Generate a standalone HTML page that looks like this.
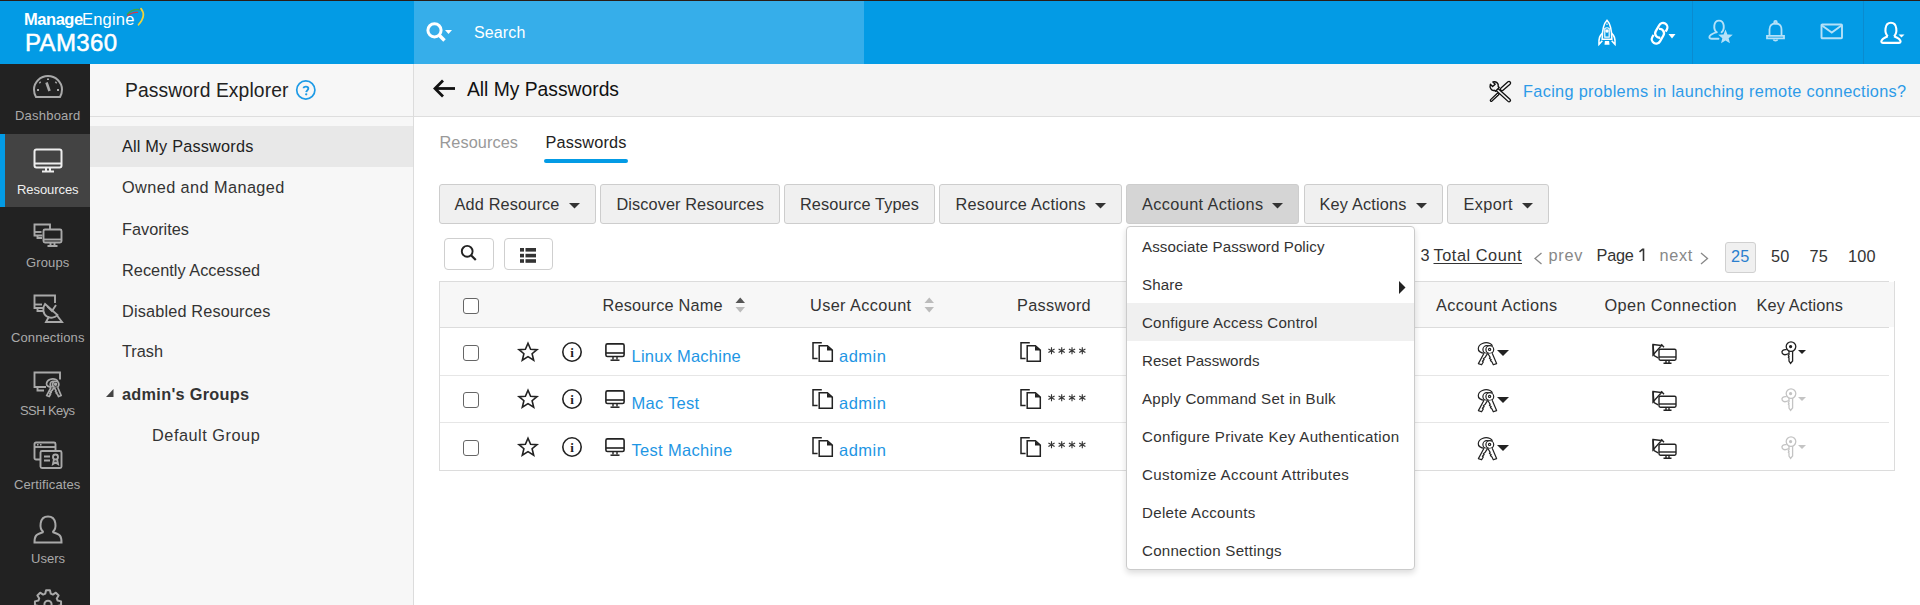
<!DOCTYPE html>
<html><head><meta charset="utf-8"><style>
html,body{margin:0;padding:0;width:1920px;height:605px;overflow:hidden;background:#fff;font-family:"Liberation Sans", sans-serif;}
.t{position:absolute;white-space:pre;line-height:normal;}
svg{overflow:visible}
</style></head><body>
<div style="position:absolute;left:0px;top:0px;width:1920px;height:64px;background:#039be5"></div>
<div style="position:absolute;left:0px;top:0px;width:1920px;height:1px;background:#2a1d17"></div>
<div style="position:absolute;left:414px;top:1px;width:450px;height:63px;background:#36aeea"></div>
<div style="position:absolute;left:1692px;top:1px;width:1px;height:63px;background:#0a8bcf"></div>
<div style="position:absolute;left:1863px;top:1px;width:1px;height:63px;background:#0a8bcf"></div>
<div style="position:absolute;left:0px;top:64px;width:90px;height:541px;background:#222"></div>
<div style="position:absolute;left:0px;top:134px;width:90px;height:73px;background:#434343"></div>
<div style="position:absolute;left:0px;top:134px;width:5px;height:73px;background:#039be5"></div>
<div style="position:absolute;left:90px;top:64px;width:323px;height:541px;background:#f7f7f7"></div>
<div style="position:absolute;left:413px;top:64px;width:1px;height:541px;background:#dcdcdc"></div>
<div style="position:absolute;left:90px;top:116px;width:323px;height:1px;background:#dedede"></div>
<div style="position:absolute;left:90px;top:126px;width:323px;height:41px;background:#e8e8e8"></div>
<div style="position:absolute;left:414px;top:64px;width:1506px;height:52px;background:#f4f4f4"></div>
<div style="position:absolute;left:414px;top:116px;width:1506px;height:1px;background:#dedede"></div>
<div style="position:absolute;left:544px;top:159px;width:84px;height:4px;background:#039be5;border-radius:2px"></div>
<div style="position:absolute;left:439px;top:184px;width:157px;height:40px;box-sizing:border-box;border:1px solid #cdcdcd;border-radius:3px;background:#f0f0f0"></div>
<div style="position:absolute;left:600px;top:184px;width:180px;height:40px;box-sizing:border-box;border:1px solid #cdcdcd;border-radius:3px;background:#f0f0f0"></div>
<div style="position:absolute;left:784px;top:184px;width:151px;height:40px;box-sizing:border-box;border:1px solid #cdcdcd;border-radius:3px;background:#f0f0f0"></div>
<div style="position:absolute;left:939px;top:184px;width:183px;height:40px;box-sizing:border-box;border:1px solid #cdcdcd;border-radius:3px;background:#f0f0f0"></div>
<div style="position:absolute;left:1126px;top:184px;width:173px;height:40px;box-sizing:border-box;border:1px solid #cdcdcd;border-radius:3px;background:#d5d5d5"></div>
<div style="position:absolute;left:1304px;top:184px;width:139px;height:40px;box-sizing:border-box;border:1px solid #cdcdcd;border-radius:3px;background:#f0f0f0"></div>
<div style="position:absolute;left:1447px;top:184px;width:102px;height:40px;box-sizing:border-box;border:1px solid #cdcdcd;border-radius:3px;background:#f0f0f0"></div>
<svg style="position:absolute;left:569px;top:203px;" width="11" height="5.5" viewBox="0 0 11 5.5"><path d="M0 0H11L5.5 5.5Z" fill="#333"/></svg>
<svg style="position:absolute;left:1095px;top:203px;" width="11" height="5.5" viewBox="0 0 11 5.5"><path d="M0 0H11L5.5 5.5Z" fill="#333"/></svg>
<svg style="position:absolute;left:1272px;top:203px;" width="11" height="5.5" viewBox="0 0 11 5.5"><path d="M0 0H11L5.5 5.5Z" fill="#333"/></svg>
<svg style="position:absolute;left:1416px;top:203px;" width="11" height="5.5" viewBox="0 0 11 5.5"><path d="M0 0H11L5.5 5.5Z" fill="#333"/></svg>
<svg style="position:absolute;left:1522px;top:203px;" width="11" height="5.5" viewBox="0 0 11 5.5"><path d="M0 0H11L5.5 5.5Z" fill="#333"/></svg>
<div style="position:absolute;left:444px;top:238px;width:50px;height:32px;box-sizing:border-box;border:1px solid #cfcfcf;border-radius:4px;background:#fff"></div>
<div style="position:absolute;left:504px;top:238px;width:49px;height:32px;box-sizing:border-box;border:1px solid #cfcfcf;border-radius:4px;background:#fff"></div>
<svg style="position:absolute;left:458px;top:243px;" width="22" height="20" viewBox="0 0 22 20"><circle cx="9.2" cy="8.3" r="5.4" fill="none" stroke="#222" stroke-width="1.9"/><path d="M13 12.2L17.8 17" stroke="#222" stroke-width="2.2"/></svg>
<svg style="position:absolute;left:519px;top:247px;" width="18" height="17" viewBox="0 0 18 17"><rect x="1" y="1" width="4" height="3.6" fill="#333"/><rect x="6.5" y="1" width="10.5" height="3.6" fill="#333"/><rect x="1" y="6.8" width="4" height="3.6" fill="#333"/><rect x="6.5" y="6.8" width="10.5" height="3.6" fill="#333"/><rect x="1" y="12.2" width="4" height="3.6" fill="#333"/><rect x="6.5" y="12.2" width="10.5" height="3.6" fill="#333"/></svg>
<div style="position:absolute;left:1725px;top:242px;width:31px;height:31px;box-sizing:border-box;border:1px solid #d0d0d0;border-radius:3px;background:#f0f0f0"></div>
<div style="position:absolute;left:439px;top:281px;width:1456px;height:190px;box-sizing:border-box;border:1px solid #dcdcdc;border-top:none;"></div>
<div style="position:absolute;left:440px;top:282px;width:1454px;height:45px;background:#f7f7f7"></div>
<div style="position:absolute;left:439px;top:281px;width:1450px;height:1px;background:#dcdcdc"></div>
<div style="position:absolute;left:440px;top:327px;width:1449px;height:1px;background:#dcdcdc"></div>
<div style="position:absolute;left:440px;top:375px;width:1449px;height:1px;background:#e6e6e6"></div>
<div style="position:absolute;left:440px;top:422px;width:1449px;height:1px;background:#e6e6e6"></div>
<div style="position:absolute;left:463px;top:298px;width:16px;height:16px;box-sizing:border-box;border:1.5px solid #666;border-radius:3px;background:#fff"></div>
<div style="position:absolute;left:463px;top:345px;width:16px;height:16px;box-sizing:border-box;border:1.5px solid #666;border-radius:3px;background:#fff"></div>
<div style="position:absolute;left:463px;top:392px;width:16px;height:16px;box-sizing:border-box;border:1.5px solid #666;border-radius:3px;background:#fff"></div>
<div style="position:absolute;left:463px;top:440px;width:16px;height:16px;box-sizing:border-box;border:1.5px solid #666;border-radius:3px;background:#fff"></div>
<svg style="position:absolute;left:735px;top:297px;" width="11" height="16" viewBox="0 0 11 16"><path d="M0.5 6L5.25 0.5L10 6Z" fill="#555"/><path d="M0.5 10H10L5.25 15.5Z" fill="#bbb"/></svg>
<svg style="position:absolute;left:924px;top:297px;" width="11" height="16" viewBox="0 0 11 16"><path d="M0.5 6L5.25 0.5L10 6Z" fill="#bbb"/><path d="M0.5 10H10L5.25 15.5Z" fill="#bbb"/></svg>
<svg style="position:absolute;left:517.5px;top:342px;" width="20" height="20" viewBox="0 0 20 20"><path d="M10 1.2L12.6 7.2L19 7.6L14.1 11.7L15.7 18.2L10 14.6L4.3 18.2L5.9 11.7L1 7.6L7.4 7.2Z" fill="none" stroke="#222" stroke-width="1.6" stroke-linejoin="miter"/></svg>
<svg style="position:absolute;left:561.5px;top:342px;" width="20" height="20" viewBox="0 0 20 20"><circle cx="10" cy="10" r="9.2" fill="none" stroke="#222" stroke-width="1.6"/><text x="10" y="14.8" text-anchor="middle" font-family="Liberation Serif" font-weight="700" font-size="13" fill="#222">i</text></svg>
<svg style="position:absolute;left:605px;top:343px;" width="20" height="19" viewBox="0 0 20 19"><rect x="0.9" y="0.9" width="18.2" height="12.6" rx="1.6" fill="none" stroke="#222" stroke-width="1.6"/><path d="M1 10H19" stroke="#222" stroke-width="1.6"/><path d="M8 13.5V16.5M12 13.5V16.5" stroke="#222" stroke-width="1.4"/><path d="M5.5 17.2H14.5" stroke="#222" stroke-width="1.5"/></svg>
<svg style="position:absolute;left:812px;top:342px;" width="22" height="20" viewBox="0 0 22 20"><path d="M9.8 0.8H1V16.6H5.6" fill="none" stroke="#222" stroke-width="1.5"/><path d="M7.2 3.8H15.4L20.3 8.2V19.3H7.2Z" fill="none" stroke="#222" stroke-width="1.5"/><path d="M15 3.8V8.6H20.3Z" fill="#222"/></svg>
<svg style="position:absolute;left:1020px;top:342px;" width="22" height="20" viewBox="0 0 22 20"><path d="M9.8 0.8H1V16.6H5.6" fill="none" stroke="#222" stroke-width="1.5"/><path d="M7.2 3.8H15.4L20.3 8.2V19.3H7.2Z" fill="none" stroke="#222" stroke-width="1.5"/><path d="M15 3.8V8.6H20.3Z" fill="#222"/></svg>
<svg style="position:absolute;left:1477px;top:341px;" width="20" height="23" viewBox="0 0 20 23"><g fill="none" stroke="#222" stroke-width="1.2" stroke-linejoin="round"><path d="M8.3 12.5C4 12 1 10.5 1.3 7.5C1.6 3 8 0.3 13 2.5C14.5 3.2 15.2 4 15.3 5"/><circle cx="9.8" cy="8.6" r="3.9" fill="#fff"/><circle cx="12.8" cy="8.6" r="3.9" fill="#fff"/><circle cx="12.6" cy="8.4" r="1.1"/><path d="M7 12.2L1.4 22.6L4.6 23.8L6.3 20.9L5.4 20.2L7.2 18.6L6.3 17.9L8.2 16.2L10.4 12.8" fill="#fff"/><path d="M11 12.8L13.2 16.4L12.4 17.2L14.2 18.8L13.4 19.6L15 21L16.3 23.8L19.6 22.6L15.2 12.2" fill="#fff"/></g></svg>
<svg style="position:absolute;left:1497px;top:350px;" width="12" height="6" viewBox="0 0 12 6"><path d="M0 0H12L6.0 6Z" fill="#222"/></svg>
<svg style="position:absolute;left:1652px;top:342.5px;" width="25" height="21" viewBox="0 0 25 21"><g fill="none" stroke="#222" stroke-width="1.4"><path d="M1 1.5L9.5 2.5L1 12Z"/><path d="M1 1.5L2 12.5L6.2 14.8"/><path d="M9.2 1.2L12 4.2"/><rect x="7" y="6.2" width="17" height="11" rx="1.4" fill="#fff"/><path d="M7 14H24"/><path d="M14 17.5V20M17 17.5V20M11.5 20.3H19.5"/></g></svg>
<svg style="position:absolute;left:1781px;top:341px;" width="16" height="23" viewBox="0 0 16 23"><g fill="none" stroke="#222" stroke-width="1.3"><circle cx="10" cy="5.6" r="4.8"/><circle cx="9.6" cy="5.6" r="1" fill="#222"/><path d="M5.6 8.6C2 8.2 0.2 10 1.2 12.2C2.6 14.4 6 13.5 7.8 12.5"/><path d="M8 9.8V13.8L7.4 14.6L8 15.4L7.4 16.2L8 17V20L9.6 22.4L11.6 20V9.9"/></g></svg>
<svg style="position:absolute;left:1798px;top:350px;" width="8" height="4" viewBox="0 0 8 4"><path d="M0 0H8L4.0 4Z" fill="#222"/></svg>
<svg style="position:absolute;left:517.5px;top:389px;" width="20" height="20" viewBox="0 0 20 20"><path d="M10 1.2L12.6 7.2L19 7.6L14.1 11.7L15.7 18.2L10 14.6L4.3 18.2L5.9 11.7L1 7.6L7.4 7.2Z" fill="none" stroke="#222" stroke-width="1.6" stroke-linejoin="miter"/></svg>
<svg style="position:absolute;left:561.5px;top:389px;" width="20" height="20" viewBox="0 0 20 20"><circle cx="10" cy="10" r="9.2" fill="none" stroke="#222" stroke-width="1.6"/><text x="10" y="14.8" text-anchor="middle" font-family="Liberation Serif" font-weight="700" font-size="13" fill="#222">i</text></svg>
<svg style="position:absolute;left:605px;top:390px;" width="20" height="19" viewBox="0 0 20 19"><rect x="0.9" y="0.9" width="18.2" height="12.6" rx="1.6" fill="none" stroke="#222" stroke-width="1.6"/><path d="M1 10H19" stroke="#222" stroke-width="1.6"/><path d="M8 13.5V16.5M12 13.5V16.5" stroke="#222" stroke-width="1.4"/><path d="M5.5 17.2H14.5" stroke="#222" stroke-width="1.5"/></svg>
<svg style="position:absolute;left:812px;top:389px;" width="22" height="20" viewBox="0 0 22 20"><path d="M9.8 0.8H1V16.6H5.6" fill="none" stroke="#222" stroke-width="1.5"/><path d="M7.2 3.8H15.4L20.3 8.2V19.3H7.2Z" fill="none" stroke="#222" stroke-width="1.5"/><path d="M15 3.8V8.6H20.3Z" fill="#222"/></svg>
<svg style="position:absolute;left:1020px;top:389px;" width="22" height="20" viewBox="0 0 22 20"><path d="M9.8 0.8H1V16.6H5.6" fill="none" stroke="#222" stroke-width="1.5"/><path d="M7.2 3.8H15.4L20.3 8.2V19.3H7.2Z" fill="none" stroke="#222" stroke-width="1.5"/><path d="M15 3.8V8.6H20.3Z" fill="#222"/></svg>
<svg style="position:absolute;left:1477px;top:388px;" width="20" height="23" viewBox="0 0 20 23"><g fill="none" stroke="#222" stroke-width="1.2" stroke-linejoin="round"><path d="M8.3 12.5C4 12 1 10.5 1.3 7.5C1.6 3 8 0.3 13 2.5C14.5 3.2 15.2 4 15.3 5"/><circle cx="9.8" cy="8.6" r="3.9" fill="#fff"/><circle cx="12.8" cy="8.6" r="3.9" fill="#fff"/><circle cx="12.6" cy="8.4" r="1.1"/><path d="M7 12.2L1.4 22.6L4.6 23.8L6.3 20.9L5.4 20.2L7.2 18.6L6.3 17.9L8.2 16.2L10.4 12.8" fill="#fff"/><path d="M11 12.8L13.2 16.4L12.4 17.2L14.2 18.8L13.4 19.6L15 21L16.3 23.8L19.6 22.6L15.2 12.2" fill="#fff"/></g></svg>
<svg style="position:absolute;left:1497px;top:397px;" width="12" height="6" viewBox="0 0 12 6"><path d="M0 0H12L6.0 6Z" fill="#222"/></svg>
<svg style="position:absolute;left:1652px;top:389.5px;" width="25" height="21" viewBox="0 0 25 21"><g fill="none" stroke="#222" stroke-width="1.4"><path d="M1 1.5L9.5 2.5L1 12Z"/><path d="M1 1.5L2 12.5L6.2 14.8"/><path d="M9.2 1.2L12 4.2"/><rect x="7" y="6.2" width="17" height="11" rx="1.4" fill="#fff"/><path d="M7 14H24"/><path d="M14 17.5V20M17 17.5V20M11.5 20.3H19.5"/></g></svg>
<svg style="position:absolute;left:1781px;top:388px;" width="16" height="23" viewBox="0 0 16 23"><g fill="none" stroke="#c4c4c4" stroke-width="1.3"><circle cx="10" cy="5.6" r="4.8"/><circle cx="9.6" cy="5.6" r="1" fill="#c4c4c4"/><path d="M5.6 8.6C2 8.2 0.2 10 1.2 12.2C2.6 14.4 6 13.5 7.8 12.5"/><path d="M8 9.8V13.8L7.4 14.6L8 15.4L7.4 16.2L8 17V20L9.6 22.4L11.6 20V9.9"/></g></svg>
<svg style="position:absolute;left:1798px;top:397px;" width="8" height="4" viewBox="0 0 8 4"><path d="M0 0H8L4.0 4Z" fill="#c4c4c4"/></svg>
<svg style="position:absolute;left:517.5px;top:437px;" width="20" height="20" viewBox="0 0 20 20"><path d="M10 1.2L12.6 7.2L19 7.6L14.1 11.7L15.7 18.2L10 14.6L4.3 18.2L5.9 11.7L1 7.6L7.4 7.2Z" fill="none" stroke="#222" stroke-width="1.6" stroke-linejoin="miter"/></svg>
<svg style="position:absolute;left:561.5px;top:437px;" width="20" height="20" viewBox="0 0 20 20"><circle cx="10" cy="10" r="9.2" fill="none" stroke="#222" stroke-width="1.6"/><text x="10" y="14.8" text-anchor="middle" font-family="Liberation Serif" font-weight="700" font-size="13" fill="#222">i</text></svg>
<svg style="position:absolute;left:605px;top:438px;" width="20" height="19" viewBox="0 0 20 19"><rect x="0.9" y="0.9" width="18.2" height="12.6" rx="1.6" fill="none" stroke="#222" stroke-width="1.6"/><path d="M1 10H19" stroke="#222" stroke-width="1.6"/><path d="M8 13.5V16.5M12 13.5V16.5" stroke="#222" stroke-width="1.4"/><path d="M5.5 17.2H14.5" stroke="#222" stroke-width="1.5"/></svg>
<svg style="position:absolute;left:812px;top:437px;" width="22" height="20" viewBox="0 0 22 20"><path d="M9.8 0.8H1V16.6H5.6" fill="none" stroke="#222" stroke-width="1.5"/><path d="M7.2 3.8H15.4L20.3 8.2V19.3H7.2Z" fill="none" stroke="#222" stroke-width="1.5"/><path d="M15 3.8V8.6H20.3Z" fill="#222"/></svg>
<svg style="position:absolute;left:1020px;top:437px;" width="22" height="20" viewBox="0 0 22 20"><path d="M9.8 0.8H1V16.6H5.6" fill="none" stroke="#222" stroke-width="1.5"/><path d="M7.2 3.8H15.4L20.3 8.2V19.3H7.2Z" fill="none" stroke="#222" stroke-width="1.5"/><path d="M15 3.8V8.6H20.3Z" fill="#222"/></svg>
<svg style="position:absolute;left:1477px;top:436px;" width="20" height="23" viewBox="0 0 20 23"><g fill="none" stroke="#222" stroke-width="1.2" stroke-linejoin="round"><path d="M8.3 12.5C4 12 1 10.5 1.3 7.5C1.6 3 8 0.3 13 2.5C14.5 3.2 15.2 4 15.3 5"/><circle cx="9.8" cy="8.6" r="3.9" fill="#fff"/><circle cx="12.8" cy="8.6" r="3.9" fill="#fff"/><circle cx="12.6" cy="8.4" r="1.1"/><path d="M7 12.2L1.4 22.6L4.6 23.8L6.3 20.9L5.4 20.2L7.2 18.6L6.3 17.9L8.2 16.2L10.4 12.8" fill="#fff"/><path d="M11 12.8L13.2 16.4L12.4 17.2L14.2 18.8L13.4 19.6L15 21L16.3 23.8L19.6 22.6L15.2 12.2" fill="#fff"/></g></svg>
<svg style="position:absolute;left:1497px;top:445px;" width="12" height="6" viewBox="0 0 12 6"><path d="M0 0H12L6.0 6Z" fill="#222"/></svg>
<svg style="position:absolute;left:1652px;top:437.5px;" width="25" height="21" viewBox="0 0 25 21"><g fill="none" stroke="#222" stroke-width="1.4"><path d="M1 1.5L9.5 2.5L1 12Z"/><path d="M1 1.5L2 12.5L6.2 14.8"/><path d="M9.2 1.2L12 4.2"/><rect x="7" y="6.2" width="17" height="11" rx="1.4" fill="#fff"/><path d="M7 14H24"/><path d="M14 17.5V20M17 17.5V20M11.5 20.3H19.5"/></g></svg>
<svg style="position:absolute;left:1781px;top:436px;" width="16" height="23" viewBox="0 0 16 23"><g fill="none" stroke="#c4c4c4" stroke-width="1.3"><circle cx="10" cy="5.6" r="4.8"/><circle cx="9.6" cy="5.6" r="1" fill="#c4c4c4"/><path d="M5.6 8.6C2 8.2 0.2 10 1.2 12.2C2.6 14.4 6 13.5 7.8 12.5"/><path d="M8 9.8V13.8L7.4 14.6L8 15.4L7.4 16.2L8 17V20L9.6 22.4L11.6 20V9.9"/></g></svg>
<svg style="position:absolute;left:1798px;top:445px;" width="8" height="4" viewBox="0 0 8 4"><path d="M0 0H8L4.0 4Z" fill="#c4c4c4"/></svg>
<div style="position:absolute;left:1126px;top:226px;width:289px;height:344px;box-sizing:border-box;border:1px solid #cbcbcb;border-radius:4px;background:#fff;box-shadow:0 3px 6px rgba(0,0,0,0.14);z-index:5"></div>
<div style="position:absolute;left:1127px;top:303px;width:287px;height:38px;background:#f0f0f0;z-index:5"></div>
<svg style="position:absolute;left:1399px;top:281px;z-index:6" width="7" height="13" viewBox="0 0 7 13"><path d="M0 0L6.5 6.5L0 13Z" fill="#222"/></svg>
<svg style="position:absolute;left:424px;top:20px;" width="30" height="24" viewBox="0 0 30 24"><circle cx="10.5" cy="10.3" r="6.6" fill="none" stroke="#fff" stroke-width="3"/><path d="M15 15L20.5 20.5" stroke="#fff" stroke-width="3.6"/><path d="M21 10H28L24.5 14Z" fill="#fff"/></svg>
<svg style="position:absolute;left:124px;top:5px;" width="24" height="22" viewBox="0 0 24 22"><g fill="none" stroke-linecap="round"><path d="M3.5 9.2Q9 3.2 16.5 5" stroke="#3aa64a" stroke-width="1.5"/><path d="M3.6 10.8Q8 6.8 13.5 7.4" stroke="#d23a4a" stroke-width="1.2"/><path d="M15.5 3.8Q17.8 4.5 19 6.2" stroke="#2f6fc2" stroke-width="1.3"/><path d="M17 3.6Q22.8 10.5 14.5 19.8" stroke="#f0d43a" stroke-width="1.7"/></g></svg>
<svg style="position:absolute;left:1597px;top:19px;" width="20" height="28" viewBox="0 0 20 28"><g fill="none" stroke="#fff" stroke-width="1.6"><path d="M10 1.3C6.3 5 5.2 10 5.2 20.3H14.8C14.8 10 13.7 5 10 1.3Z"/><path d="M5.3 14.5C2.5 16.5 1.6 20.5 2 25.3L5.3 21.8M14.7 14.5C17.5 16.5 18.4 20.5 18 25.3L14.7 21.8"/><path d="M7.8 18.2V9.5Q10 8 12.2 9.5V18.2Z" stroke-width="1.2"/></g><path d="M10 4L9 5.8H11Z" fill="#fff"/><circle cx="10" cy="12" r="1.7" fill="#fff"/><path d="M7.9 22L7.5 25.8H12.5L12.1 22Z" fill="#fff"/></svg>
<svg style="position:absolute;left:1646px;top:18px;" width="34" height="30" viewBox="0 0 34 30"><g fill="none" stroke="#fff" stroke-width="2.3" stroke-linecap="butt"><path transform="translate(15.3 12.36) rotate(30)" d="M2.83 6.77A4.4 4.4 0 0 1 -4.4 3.4L-4.4 -3.4A4.4 4.4 0 0 1 4.4 -3.4L4.4 -1"/><path transform="translate(11.9 18.24) rotate(30)" d="M-2.83 -6.77A4.4 4.4 0 0 1 4.4 -3.4L4.4 3.4A4.4 4.4 0 0 1 -4.4 3.4L-4.4 1"/></g><path d="M22.5 16H29.5L26 20.5Z" fill="#fff"/></svg>
<svg style="position:absolute;left:1708px;top:19px;" width="28" height="28" viewBox="0 0 28 28"><g fill="none" stroke="#b5e1f8" stroke-width="1.9" stroke-linecap="round"><path d="M8.6 13.2C5.2 10.5 5.2 1.6 11 1.6C16.8 1.6 16.8 10.5 13.6 13.2"/><path d="M8.6 13.2C3.5 15 1.4 16 1.4 18C1.4 19.3 2.2 19.8 3.8 19.8H10.5"/></g><path d="M17.50 10.60L19.44 15.53L24.73 15.85L20.64 19.22L21.97 24.35L17.50 21.50L13.03 24.35L14.36 19.22L10.27 15.85L15.56 15.53Z" fill="#b5e1f8" stroke="#039be5" stroke-width="1.2" stroke-linejoin="round"/><path d="M17.50 10.60L19.44 15.53L24.73 15.85L20.64 19.22L21.97 24.35L17.50 21.50L13.03 24.35L14.36 19.22L10.27 15.85L15.56 15.53Z" fill="#b5e1f8"/></svg>
<svg style="position:absolute;left:1766px;top:20px;" width="20" height="24" viewBox="0 0 20 24"><g fill="none" stroke="#b5e1f8" stroke-width="1.8"><circle cx="9.5" cy="2.2" r="1.3"/><path d="M3.5 15.5V9.5C3.5 5.5 6 3.5 9.5 3.5C13 3.5 15.5 5.5 15.5 9.5V15.5"/><path d="M1 18.3H18V15.8H1Z"/><path d="M7.5 19.5C8 21 11 21 11.5 19.5"/></g></svg>
<svg style="position:absolute;left:1820px;top:23px;" width="24" height="17" viewBox="0 0 24 17"><g fill="none" stroke="#b5e1f8" stroke-width="1.9"><rect x="1.5" y="1.5" width="20.5" height="13.8" rx="0.8"/><path d="M2 2.5L11.75 9.5L21.5 2.5"/></g></svg>
<svg style="position:absolute;left:1880px;top:21px;" width="28" height="25" viewBox="0 0 28 25"><g fill="none" stroke="#fff" stroke-width="2.1" stroke-linejoin="round"><path d="M7.8 15.2C4.2 12 4.4 1.8 10.9 1.8C17.4 1.8 17.6 12 14 15.2"/><path d="M7.8 15.2C2.5 17.4 1.3 18.5 1.3 20.6C1.3 21.6 1.8 21.9 2.8 21.9H19.1C20.1 21.9 20.6 21.6 20.6 20.6C20.6 18.5 19.4 17.4 14 15.2"/></g><path d="M18.5 13.5H24.5L21.5 16.5Z" fill="#fff"/></svg>
<svg style="position:absolute;left:295px;top:80px;" width="22" height="22" viewBox="0 0 22 22"><circle cx="10.8" cy="10" r="9.1" fill="none" stroke="#1e9be6" stroke-width="1.7"/><path d="M8.6 8.2C8.6 6.2 13.3 6 13.3 8.5C13.3 10.2 11.4 10.4 11.2 12.2" fill="none" stroke="#1e9be6" stroke-width="1.9"/><circle cx="11.2" cy="14.3" r="1.15" fill="#1e9be6"/></svg>
<svg style="position:absolute;left:432px;top:78px;" width="25" height="21" viewBox="0 0 25 21"><g fill="none" stroke="#111" stroke-width="2.8"><path d="M3 10.5H23"/><path d="M11 2.5L3 10.5L11 18.5"/></g></svg>
<svg style="position:absolute;left:1489px;top:81px;" width="24" height="22" viewBox="0 0 24 22"><g stroke-linecap="round" fill="none"><path d="M13 8.2L20 2" stroke="#111" stroke-width="4.4"/><path d="M13 8.2L20 2" stroke="#f4f4f4" stroke-width="1.8"/><path d="M2.3 19.3L9 13" stroke="#111" stroke-width="3.2"/><path d="M2.3 19.3L9 13" stroke="#f4f4f4" stroke-width="0.9"/><path d="M7.5 8L20 19.3" stroke="#111" stroke-width="4.2"/><path d="M7.5 8L20 19.3" stroke="#f4f4f4" stroke-width="1.6"/><path d="M1.4 3.2L3.6 5.6L6.2 3.2L3.9 1C6.8 0 10 2.2 9.2 5.5L10.2 6.5L6.5 10.3L5.5 9.3C2.5 10.2 0.2 6.5 1.4 3.2Z" fill="#f4f4f4" stroke="#111" stroke-width="1.4" stroke-linejoin="round"/></g></svg>
<svg style="position:absolute;left:33px;top:74px;" width="30" height="26" viewBox="0 0 30 26"><g fill="none" stroke="#a9a9a9" stroke-width="2"><path d="M3 23H27C28.5 20.5 29 18.5 29 15.5C29 8 22.5 2 15 2C7.5 2 1 8 1 15.5C1 18.5 1.5 20.5 3 23Z"/><path d="M13.5 8.5L16.5 17" stroke-width="2.6"/><path d="M15 4.5V6M6.5 8L7.5 9M23.5 8L22.5 9M4 16H6M24 16H26"/></g></svg>
<svg style="position:absolute;left:33px;top:148px;" width="30" height="26" viewBox="0 0 30 26"><g fill="none" stroke="#eeeeee" stroke-width="2"><rect x="1.5" y="1.5" width="27" height="18" rx="2"/><path d="M1.5 15.5H28.5"/><path d="M13 19.5V23M17 19.5V23"/><path d="M9 23.5H21"/></g></svg>
<svg style="position:absolute;left:33px;top:223px;" width="30" height="26" viewBox="0 0 30 26"><g fill="none" stroke="#a9a9a9" stroke-width="1.9"><path d="M9.5 12.5H1.5V1.5H17V6"/><path d="M1.5 9H8.5"/><path d="M4.5 12.5V15H9"/><rect x="10.5" y="6.5" width="18" height="13" rx="1.5"/><path d="M10.5 16.5H28.5"/><path d="M17.5 19.5V22.5M21.5 19.5V22.5M14.5 23H24.5"/></g></svg>
<svg style="position:absolute;left:33px;top:294px;" width="31" height="30" viewBox="0 0 31 30"><g fill="none" stroke="#a9a9a9" stroke-width="1.9"><path d="M10 14H1.5V1.5H22V9"/><path d="M1.5 10.5H9"/><path d="M4.5 14V17H10"/><path d="M12 10C9 14 10 20 14 22.5C17 24.5 22 24 24.5 21Z"/><path d="M14.5 12.5L19 17L23 11"/><path d="M16 22.5L13 28H29L24 21.5"/></g></svg>
<svg style="position:absolute;left:33px;top:371px;" width="31" height="27" viewBox="0 0 31 27"><g fill="none" stroke="#a9a9a9" stroke-width="1.9"><path d="M13 16H1.5V1.5H27V8.5"/><path d="M4.5 16V19.5H11"/></g><g transform="translate(12.5 6.5) scale(0.8)"><g fill="none" stroke="#a9a9a9" stroke-width="2.1" stroke-linejoin="round"><path d="M8.3 12.5C4 12 1 10.5 1.3 7.5C1.6 3 8 0.3 13 2.5C14.5 3.2 15.2 4 15.3 5"/><circle cx="9.8" cy="8.6" r="3.9" fill="#222"/><circle cx="12.8" cy="8.6" r="3.9" fill="#222"/><circle cx="12.6" cy="8.4" r="1.1"/><path d="M7 12.2L1.4 22.6L4.6 23.8L6.3 20.9L5.4 20.2L7.2 18.6L6.3 17.9L8.2 16.2L10.4 12.8" fill="#222"/><path d="M11 12.8L13.2 16.4L12.4 17.2L14.2 18.8L13.4 19.6L15 21L16.3 23.8L19.6 22.6L15.2 12.2" fill="#222"/></g></g></svg>
<svg style="position:absolute;left:33px;top:441px;" width="31" height="29" viewBox="0 0 31 29"><g fill="none" stroke="#a9a9a9" stroke-width="1.9"><rect x="1.5" y="1.5" width="21" height="17" rx="1.5"/><path d="M1.5 6H22.5"/><path d="M4 3.8H5.5M7 3.8H8.5" stroke-width="1.5"/><rect x="7.5" y="10" width="21" height="17" rx="1.5" fill="#222"/><path d="M11 15.5H17M11 19.5H17"/><circle cx="22.5" cy="16" r="2.5"/><path d="M21 18L20 23L22.5 21.5L25 23L24 18"/></g></svg>
<svg style="position:absolute;left:33px;top:515px;" width="30" height="30" viewBox="0 0 30 30"><g fill="none" stroke="#a9a9a9" stroke-width="2"><path d="M10.5 17C6 14 6 1.5 15 1.5C24 1.5 24 14 19.5 17"/><path d="M10.5 17C2.5 19.5 1.5 21 1.5 27.5H28.5C28.5 21 27.5 19.5 19.5 17"/></g></svg>
<svg style="position:absolute;left:33px;top:588px;" width="30" height="30" viewBox="0 0 30 30"><g fill="none" stroke="#a9a9a9" stroke-width="2" stroke-linejoin="round"><path d="M12.24 5.69L13.05 2.24L16.95 2.24L17.76 5.69L19.85 6.55L22.85 4.69L25.61 7.45L23.75 10.45L24.61 12.54L28.06 13.35L28.06 17.25L24.61 18.06L23.75 20.15L25.61 23.15L22.85 25.91L19.85 24.05L17.76 24.91L16.95 28.36L13.05 28.36L12.24 24.91L10.15 24.05L7.15 25.91L4.39 23.15L6.25 20.15L5.39 18.06L1.94 17.25L1.94 13.35L5.39 12.54L6.25 10.45L4.39 7.45L7.15 4.69L10.15 6.55Z"/><circle cx="15" cy="16.3" r="3.6"/></g></svg>
<svg style="position:absolute;left:106px;top:389px" width="8" height="9"><path d="M7.5 0V8H0Z" fill="#444"/></svg>
<svg style="position:absolute;left:1533px;top:252px;" width="11" height="13" viewBox="0 0 11 13"><path d="M8.5 1L2 6.5L8.5 12" fill="none" stroke="#888" stroke-width="1.3"/></svg>
<svg style="position:absolute;left:1638px;top:248px;" width="8" height="14" viewBox="0 0 8 14"><path d="M5.5 13V1.3H4.6L1.5 3.8" fill="none" stroke="#333" stroke-width="1.6"/></svg>
<svg style="position:absolute;left:1699px;top:252px;" width="11" height="13" viewBox="0 0 11 13"><path d="M2 1L8.5 6.5L2 12" fill="none" stroke="#888" stroke-width="1.3"/></svg>
<svg style="position:absolute;left:1045px;top:346px;" width="45" height="10" viewBox="0 0 45 10"><path d="M6.5 1.1999999999999886V8.199999999999989M3.4 2.899999999999989L9.6 6.4999999999999885M3.4 6.4999999999999885L9.6 2.899999999999989" stroke="#333" stroke-width="1.1"/><path d="M16.700000000000045 1.1999999999999886V8.199999999999989M13.600000000000046 2.899999999999989L19.800000000000047 6.4999999999999885M13.600000000000046 6.4999999999999885L19.800000000000047 2.899999999999989" stroke="#333" stroke-width="1.1"/><path d="M27.0 1.1999999999999886V8.199999999999989M23.9 2.899999999999989L30.1 6.4999999999999885M23.9 6.4999999999999885L30.1 2.899999999999989" stroke="#333" stroke-width="1.1"/><path d="M37.299999999999955 1.1999999999999886V8.199999999999989M34.19999999999995 2.899999999999989L40.399999999999956 6.4999999999999885M34.19999999999995 6.4999999999999885L40.399999999999956 2.899999999999989" stroke="#333" stroke-width="1.1"/></svg>
<svg style="position:absolute;left:1045px;top:393px;" width="45" height="10" viewBox="0 0 45 10"><path d="M6.5 1.1999999999999886V8.199999999999989M3.4 2.899999999999989L9.6 6.4999999999999885M3.4 6.4999999999999885L9.6 2.899999999999989" stroke="#333" stroke-width="1.1"/><path d="M16.700000000000045 1.1999999999999886V8.199999999999989M13.600000000000046 2.899999999999989L19.800000000000047 6.4999999999999885M13.600000000000046 6.4999999999999885L19.800000000000047 2.899999999999989" stroke="#333" stroke-width="1.1"/><path d="M27.0 1.1999999999999886V8.199999999999989M23.9 2.899999999999989L30.1 6.4999999999999885M23.9 6.4999999999999885L30.1 2.899999999999989" stroke="#333" stroke-width="1.1"/><path d="M37.299999999999955 1.1999999999999886V8.199999999999989M34.19999999999995 2.899999999999989L40.399999999999956 6.4999999999999885M34.19999999999995 6.4999999999999885L40.399999999999956 2.899999999999989" stroke="#333" stroke-width="1.1"/></svg>
<svg style="position:absolute;left:1045px;top:440px;" width="45" height="10" viewBox="0 0 45 10"><path d="M6.5 1.1999999999999886V8.199999999999989M3.4 2.899999999999989L9.6 6.4999999999999885M3.4 6.4999999999999885L9.6 2.899999999999989" stroke="#333" stroke-width="1.1"/><path d="M16.700000000000045 1.1999999999999886V8.199999999999989M13.600000000000046 2.899999999999989L19.800000000000047 6.4999999999999885M13.600000000000046 6.4999999999999885L19.800000000000047 2.899999999999989" stroke="#333" stroke-width="1.1"/><path d="M27.0 1.1999999999999886V8.199999999999989M23.9 2.899999999999989L30.1 6.4999999999999885M23.9 6.4999999999999885L30.1 2.899999999999989" stroke="#333" stroke-width="1.1"/><path d="M37.299999999999955 1.1999999999999886V8.199999999999989M34.19999999999995 2.899999999999989L40.399999999999956 6.4999999999999885M34.19999999999995 6.4999999999999885L40.399999999999956 2.899999999999989" stroke="#333" stroke-width="1.1"/></svg>
<div class="t" style="left:24px;top:10px;font-size:16.5px;color:#fff;font-weight:700;letter-spacing:-0.456px;">Manage</div>
<div class="t" style="left:82px;top:10px;font-size:16.5px;color:#fff;letter-spacing:0.185px;">Engine</div>
<div class="t" style="left:25px;top:29px;font-size:24px;color:#fff;letter-spacing:0.37px;-webkit-text-stroke:0.5px #fff">PAM360</div>
<div class="t" style="left:474px;top:24px;font-size:16px;color:#fff;letter-spacing:0.133px;">Search</div>
<div class="t" style="left:15px;top:108px;font-size:13px;color:#aaa;letter-spacing:0.21px;">Dashboard</div>
<div class="t" style="left:17px;top:182px;font-size:13px;color:#f0f0f0;letter-spacing:-0.071px;">Resources</div>
<div class="t" style="left:26px;top:255px;font-size:13px;color:#aaa;letter-spacing:0.143px;">Groups</div>
<div class="t" style="left:11px;top:330px;font-size:13px;color:#aaa;letter-spacing:0.111px;">Connections</div>
<div class="t" style="left:20px;top:403px;font-size:13px;color:#aaa;letter-spacing:-0.594px;">SSH Keys</div>
<div class="t" style="left:14px;top:477px;font-size:13px;color:#aaa;letter-spacing:0.122px;">Certificates</div>
<div class="t" style="left:31px;top:551px;font-size:13px;color:#aaa;letter-spacing:0.029px;">Users</div>
<div class="t" style="left:125px;top:80px;font-size:19.3px;color:#222;letter-spacing:0.099px;">Password Explorer</div>
<div class="t" style="left:122px;top:137px;font-size:16.3px;color:#222;letter-spacing:0.188px;">All My Passwords</div>
<div class="t" style="left:122px;top:178px;font-size:16.3px;color:#333;letter-spacing:0.417px;">Owned and Managed</div>
<div class="t" style="left:122px;top:220px;font-size:16.3px;color:#333;">Favorites</div>
<div class="t" style="left:122px;top:261px;font-size:16.3px;color:#333;letter-spacing:0.032px;">Recently Accessed</div>
<div class="t" style="left:122px;top:302px;font-size:16.3px;color:#333;letter-spacing:0.155px;">Disabled Resources</div>
<div class="t" style="left:122px;top:342px;font-size:16.3px;color:#333;">Trash</div>
<div class="t" style="left:122px;top:385px;font-size:16.3px;color:#333;font-weight:700;letter-spacing:0.286px;">admin's Groups</div>
<div class="t" style="left:152px;top:426px;font-size:16.3px;color:#333;letter-spacing:0.533px;">Default Group</div>
<div class="t" style="left:467px;top:79px;font-size:19.3px;color:#111;letter-spacing:-0.01px;">All My Passwords</div>
<div class="t" style="left:1523px;top:82px;font-size:16.3px;color:#2d9be8;letter-spacing:0.334px;">Facing problems in launching remote connections?</div>
<div class="t" style="left:439.5px;top:133px;font-size:16.3px;color:#999;letter-spacing:0.075px;">Resources</div>
<div class="t" style="left:545.5px;top:133px;font-size:16.3px;color:#222;letter-spacing:0.162px;">Passwords</div>
<div class="t" style="left:454.5px;top:195px;font-size:16.3px;color:#333;letter-spacing:0.159px;">Add Resource</div>
<div class="t" style="left:616.5px;top:195px;font-size:16.3px;color:#333;letter-spacing:0.101px;">Discover Resources</div>
<div class="t" style="left:800px;top:195px;font-size:16.3px;color:#333;letter-spacing:0.117px;">Resource Types</div>
<div class="t" style="left:955.5px;top:195px;font-size:16.3px;color:#333;letter-spacing:0.237px;">Resource Actions</div>
<div class="t" style="left:1142px;top:195px;font-size:16.3px;color:#333;letter-spacing:0.376px;">Account Actions</div>
<div class="t" style="left:1319.5px;top:195px;font-size:16.3px;color:#333;letter-spacing:0.184px;">Key Actions</div>
<div class="t" style="left:1463.5px;top:195px;font-size:16.3px;color:#333;letter-spacing:0.406px;">Export</div>
<div class="t" style="left:1420.5px;top:246px;font-size:16.3px;color:#333;">3</div>
<div class="t" style="left:1433.5px;top:246px;font-size:16.3px;color:#333;letter-spacing:0.558px;text-decoration:underline;text-underline-offset:2px">Total Count</div>
<div class="t" style="left:1548.5px;top:246px;font-size:16.3px;color:#888;letter-spacing:0.703px;">prev</div>
<div class="t" style="left:1596.5px;top:246px;font-size:16.3px;color:#333;letter-spacing:-0.233px;">Page</div>
<div class="t" style="left:1659.5px;top:246px;font-size:16.3px;color:#888;letter-spacing:0.68px;">next</div>
<div class="t" style="left:1731px;top:247px;font-size:16.3px;color:#2b7fce;letter-spacing:0.287px;">25</div>
<div class="t" style="left:1771px;top:247px;font-size:16.3px;color:#333;letter-spacing:0.188px;">50</div>
<div class="t" style="left:1809.5px;top:247px;font-size:16.3px;color:#333;letter-spacing:0.188px;">75</div>
<div class="t" style="left:1848px;top:247px;font-size:16.3px;color:#333;letter-spacing:0.243px;">100</div>
<div class="t" style="left:602.5px;top:296px;font-size:16.3px;color:#333;letter-spacing:0.197px;">Resource Name</div>
<div class="t" style="left:810px;top:296px;font-size:16.3px;color:#333;letter-spacing:0.388px;">User Account</div>
<div class="t" style="left:1017px;top:296px;font-size:16.3px;color:#333;letter-spacing:0.312px;">Password</div>
<div class="t" style="left:1436px;top:296px;font-size:16.3px;color:#333;letter-spacing:0.376px;">Account Actions</div>
<div class="t" style="left:1604.5px;top:296px;font-size:16.3px;color:#333;letter-spacing:0.384px;">Open Connection</div>
<div class="t" style="left:1756.5px;top:296px;font-size:16.3px;color:#333;letter-spacing:0.129px;">Key Actions</div>
<div class="t" style="left:631.5px;top:347px;font-size:16.5px;color:#1e96e4;letter-spacing:0.238px;">Linux Machine</div>
<div class="t" style="left:839px;top:347px;font-size:16.5px;color:#1e96e4;letter-spacing:0.509px;">admin</div>
<div class="t" style="left:631.5px;top:394px;font-size:16.5px;color:#1e96e4;letter-spacing:0.273px;">Mac Test</div>
<div class="t" style="left:839px;top:394px;font-size:16.5px;color:#1e96e4;letter-spacing:0.509px;">admin</div>
<div class="t" style="left:631.5px;top:441px;font-size:16.5px;color:#1e96e4;letter-spacing:0.315px;">Test Machine</div>
<div class="t" style="left:839px;top:441px;font-size:16.5px;color:#1e96e4;letter-spacing:0.509px;">admin</div>
<div class="t" style="left:1142px;top:238px;font-size:15.1px;color:#333;letter-spacing:0.086px;z-index:7">Associate Password Policy</div>
<div class="t" style="left:1142px;top:276px;font-size:15.1px;color:#333;letter-spacing:0.144px;z-index:7">Share</div>
<div class="t" style="left:1142px;top:314px;font-size:15.1px;color:#333;letter-spacing:0.216px;z-index:7">Configure Access Control</div>
<div class="t" style="left:1142px;top:352px;font-size:15.1px;color:#333;letter-spacing:0.003px;z-index:7">Reset Passwords</div>
<div class="t" style="left:1142px;top:390px;font-size:15.1px;color:#333;letter-spacing:0.239px;z-index:7">Apply Command Set in Bulk</div>
<div class="t" style="left:1142px;top:428px;font-size:15.1px;color:#333;letter-spacing:0.321px;z-index:7">Configure Private Key Authentication</div>
<div class="t" style="left:1142px;top:466px;font-size:15.1px;color:#333;letter-spacing:0.385px;z-index:7">Customize Account Attributes</div>
<div class="t" style="left:1142px;top:504px;font-size:15.1px;color:#333;letter-spacing:0.295px;z-index:7">Delete Accounts</div>
<div class="t" style="left:1142px;top:542px;font-size:15.1px;color:#333;letter-spacing:0.253px;z-index:7">Connection Settings</div>
</body></html>
